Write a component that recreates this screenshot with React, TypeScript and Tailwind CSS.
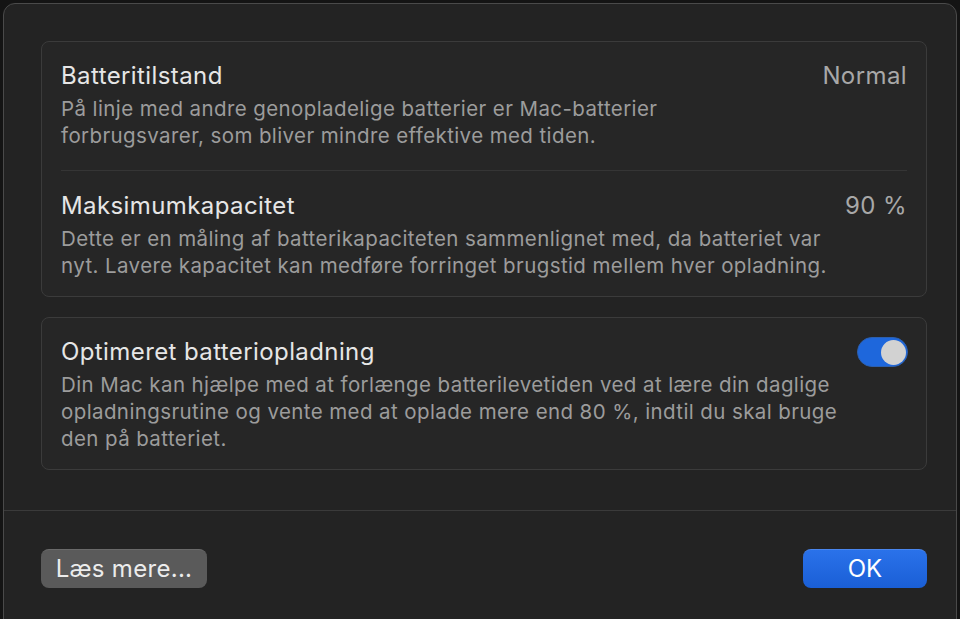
import React from "react";

const font = { fontFamily: "Inter, 'Noto Sans', 'Liberation Sans', sans-serif" };

function Row({ title, value, desc }: { title: string; value?: React.ReactNode; desc: string[] }) {
  return (
    <div className="flex items-start justify-between gap-4">
      <div className="flex flex-col">
        <div className="text-[24px] leading-[28px] tracking-[0.4px] text-[#e6e6e6]">{title}</div>
        <div className="mt-[5px] text-[20.5px] leading-[27px] tracking-[0.4px] text-[#9c9c9c]">
          {desc.map((d, i) => (
            <div key={i} className="whitespace-nowrap">{d}</div>
          ))}
        </div>
      </div>
      {value}
    </div>
  );
}

export default function App() {
  return (
    <div className="w-[960px] h-[619px] overflow-hidden bg-[#141414] pt-[3px] pl-[3px] pr-[3px]" style={font}>
      <div className="h-[660px] rounded-t-[12px] border border-[#4a4a4a] bg-[#232323] flex flex-col">
        <div className="pl-[37px] pr-[29px] pt-[37px]">
          <div className="rounded-[8px] border border-[#3b3b3b] bg-[#262626] pl-[19px] pr-[19px] pt-[20px] pb-[17px]">
            <Row
              title="Batteritilstand"
              value={<div className="text-[24px] leading-[28px] tracking-[0.4px] text-[#a8a8a8]">Normal</div>}
              desc={[
                "På linje med andre genopladelige batterier er Mac-batterier",
                "forbrugsvarer, som bliver mindre effektive med tiden.",
              ]}
            />
            <div className="mt-[21px] mb-[21px] h-px bg-[#353535]" />
            <Row
              title="Maksimumkapacitet"
              value={<div className="text-[24px] leading-[28px] tracking-[0.4px] text-[#a8a8a8]">90 %</div>}
              desc={[
                "Dette er en måling af batterikapaciteten sammenlignet med, da batteriet var",
                "nyt. Lavere kapacitet kan medføre forringet brugstid mellem hver opladning.",
              ]}
            />
          </div>
          <div className="mt-[20px] rounded-[8px] border border-[#3b3b3b] bg-[#262626] pl-[19px] pr-[18px] pt-[20px] pb-[17px]">
            <Row
              title="Optimeret batteriopladning"
              value={
                <div className="mt-[-1px] w-[51px] h-[30px] rounded-full bg-[#1e67dc] border border-[#2c5fae] flex items-center justify-end pr-[1px] shrink-0">
                  <div className="w-[25px] h-[25px] rounded-full bg-[#d2d2d2]" />
                </div>
              }
              desc={[
                "Din Mac kan hjælpe med at forlænge batterilevetiden ved at lære din daglige",
                "opladningsrutine og vente med at oplade mere end 80 %, indtil du skal bruge",
                "den på batteriet.",
              ]}
            />
          </div>
        </div>
        <div className="mt-[40px] h-px bg-[#3a3a3a]" />
        <div className="pl-[37px] pr-[29px] pt-[38px] flex items-center justify-between">
          <button className="h-[39px] w-[166px] rounded-[8px] bg-[#5a5a5a] border-t border-[#6a6a6a] text-[24px] tracking-[0.3px] text-[#ececec] flex items-center justify-center">
            Læs mere...
          </button>
          <button className="h-[39px] w-[124px] rounded-[8px] bg-gradient-to-b from-[#2a72ea] to-[#1a5fd6] border-t border-[#4a86ee] text-[24px] text-white flex items-center justify-center">
            OK
          </button>
        </div>
      </div>
    </div>
  );
}
